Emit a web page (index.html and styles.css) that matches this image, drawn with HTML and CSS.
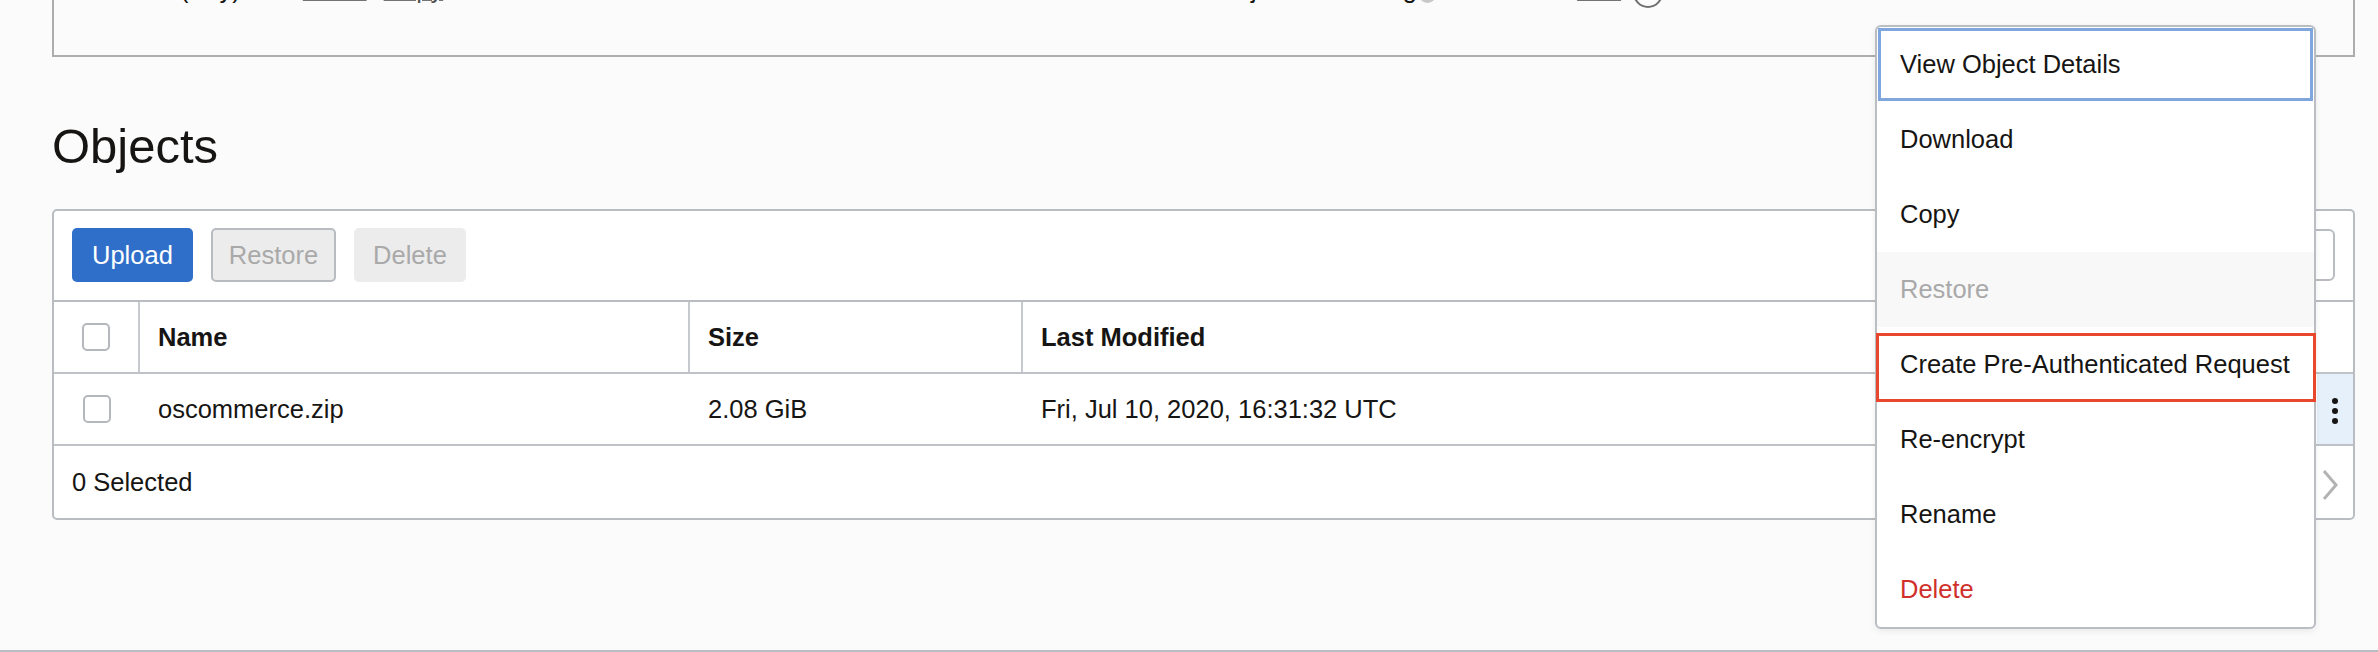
FILE: index.html
```html
<!DOCTYPE html>
<html lang="en">
<head>
<meta charset="utf-8">
<title>Objects</title>
<link rel="stylesheet" href="styles.css">
</head>
<body>
<div class="page">
  <section class="details">
    <div class="details-row">
      <div class="dcol left">
        <span>Default (Any)</span>
        <a class="lnk l1">Show</a>
        <a class="lnk l2">Copy</a>
      </div>
      <div class="dcol right">
        <span>Object Versioning</span>
        <span class="dot"></span>
        <span class="muted">Disabled</span>
        <a class="lnk l3">Edit</a>
        <span class="info"></span>
      </div>
    </div>
  </section>

  <h1 class="title">Objects</h1>

  <section class="table-panel">
    <div class="toolbar">
      <button class="btn primary">Upload</button>
      <button class="btn off outlined">Restore</button>
      <button class="btn off plain">Delete</button>
      <div class="spacer"></div>
      <input class="search" type="text" aria-label="Search">
    </div>

    <div class="grid head">
      <div class="cell chk divided"><span class="checkbox"></span></div>
      <div class="cell divided">Name</div>
      <div class="cell divided">Size</div>
      <div class="cell">Last Modified</div>
      <div class="cell act"></div>
    </div>

    <div class="grid row">
      <div class="cell chk"><span class="checkbox"></span></div>
      <div class="cell">oscommerce.zip</div>
      <div class="cell">2.08 GiB</div>
      <div class="cell">Fri, Jul 10, 2020, 16:31:32 UTC</div>
      <div class="cell act active"><span class="kebab"><i></i><i></i><i></i></span></div>
    </div>

    <div class="footer">
      <span>0 Selected</span>
      <svg class="chev" width="18" height="32" viewBox="0 0 18 32" aria-hidden="true">
        <polyline points="3,2 15,16 3,30" fill="none" stroke="#b3b3b3" stroke-width="3"/>
      </svg>
    </div>
  </section>

  <div class="menu">
    <div class="menu-item focus">View Object Details</div>
    <div class="menu-item">Download</div>
    <div class="menu-item">Copy</div>
    <div class="menu-item off">Restore</div>
    <div class="menu-item marked">Create Pre-Authenticated Request</div>
    <div class="menu-item">Re-encrypt</div>
    <div class="menu-item">Rename</div>
    <div class="menu-item danger">Delete</div>
  </div>
</div>
</body>
</html>
```

FILE: styles.css
```css
* { box-sizing: border-box; }

body {
  margin: 0;
  background: #fbfbfb;
  font-family: "Liberation Sans", Arial, sans-serif;
  color: #161513;
  overflow: hidden;
}

.page {
  position: relative;
  height: 652px;
  border-bottom: 2px solid #b9bdc2;
  padding: 0 23px 0 52px;
}

/* cut-off details panel at the top */
.details {
  height: 57px;
  border: 2px solid #adadad;
  border-top: 0;
  overflow: hidden;
}

.details-row {
  display: flex;
  height: 30px;
  margin-top: -26px;
  padding: 0 18px;
  font-size: 25.5px;
  line-height: 30px;
}

.dcol {
  display: flex;
  align-items: center;
  height: 30px;
  white-space: nowrap;
}

.dcol.left {
  flex: 0 0 1145px;
  padding-left: 20px;
}

.lnk {
  color: #555;
  text-decoration: underline;
  text-decoration-color: #737373;
  text-decoration-thickness: 2px;
}

.l1 { margin-left: 62px; }
.l2 { margin-left: 17px; }
.l3 { margin-left: 12px; }

.muted {
  color: #9a9a9a;
  margin-left: 30px;
}

.dot {
  flex: none;
  width: 17px;
  height: 17px;
  margin: 11px 0 0 2px;
  border-radius: 50%;
  background: #c8c8c8;
}

.info {
  flex: none;
  width: 30px;
  height: 30px;
  margin: 8px 0 0 12px;
  border-radius: 50%;
  border: 2px solid #6f6f6f;
}

/* heading */
.title {
  margin: 61px 0 0;
  font-size: 49px;
  font-weight: 400;
  line-height: 56px;
  color: #161513;
}

/* table panel */
.table-panel {
  margin-top: 35px;
  border: 2px solid #b9bdc2;
  border-radius: 5px;
  background: #fff;
}

.toolbar {
  display: flex;
  align-items: center;
  gap: 18px;
  padding: 17px 18px 18px;
  border-bottom: 2px solid #b9bdc2;
}

.btn {
  height: 54px;
  border: 0;
  border-radius: 5px;
  font-family: inherit;
  font-size: 25.5px;
  padding: 0 20px;
}

.btn.primary {
  background: #2f6fc9;
  color: #fff;
}

.btn.off {
  background: #ececec;
  color: #a9a9a9;
}

.btn.outlined {
  border: 2px solid #b8bcc1;
  padding: 0 16px;
}

.btn.plain { padding: 0 19px; }

.spacer { flex: 1; }

.search {
  width: 400px;
  height: 52px;
  border: 2px solid #b9bdc2;
  border-radius: 6px;
  background: #fff;
}

.grid {
  display: grid;
  grid-template-columns: 86px 550px 333px 1fr 36px;
  border-bottom: 2px solid #bfc3c7;
}

.cell {
  height: 70px;
  display: flex;
  align-items: center;
  padding-left: 18px;
  font-size: 25.5px;
  white-space: nowrap;
}

.head .cell { font-weight: 700; }

.cell.divided { border-right: 2px solid #c6c9cd; }

.cell.chk {
  justify-content: center;
  padding: 0;
}

.cell.act { padding: 0; justify-content: center; }

.cell.active { background: #e6f0fa; }

.checkbox {
  width: 28px;
  height: 28px;
  border: 2px solid #b4b8bd;
  border-radius: 5px;
  background: #fff;
}

.kebab {
  display: flex;
  flex-direction: column;
  gap: 4px;
  margin-top: 4px;
}

.kebab i {
  width: 6px;
  height: 6px;
  border-radius: 50%;
  background: #161513;
}

.footer {
  height: 72px;
  display: flex;
  align-items: center;
  justify-content: space-between;
  padding: 0 14px 0 18px;
  font-size: 25.5px;
}

.chev { margin-top: 6px; }

/* action menu */
.menu {
  position: absolute;
  left: 1875px;
  top: 25px;
  width: 441px;
  border: 2px solid #babec3;
  border-radius: 6px;
  background: #fff;
  box-shadow: 0 2px 6px rgba(0, 0, 0, 0.08);
}

.menu-item {
  position: relative;
  height: 75px;
  display: flex;
  align-items: center;
  padding-left: 23px;
  font-size: 25.5px;
  color: #161513;
  white-space: nowrap;
}

.menu-item.focus {
  margin: 1px;
  height: 73px;
  border: 3px solid #7fa7dd;
  padding-left: 19px;
}

.menu-item.off {
  background: #f8f8f8;
  color: #a9a9a9;
}

.menu-item.danger { color: #d02f2b; }

.menu-item.marked::after {
  content: "";
  position: absolute;
  top: 6px;
  bottom: 0;
  left: -1px;
  right: -2px;
  border: 3px solid #e8472e;
}
```
